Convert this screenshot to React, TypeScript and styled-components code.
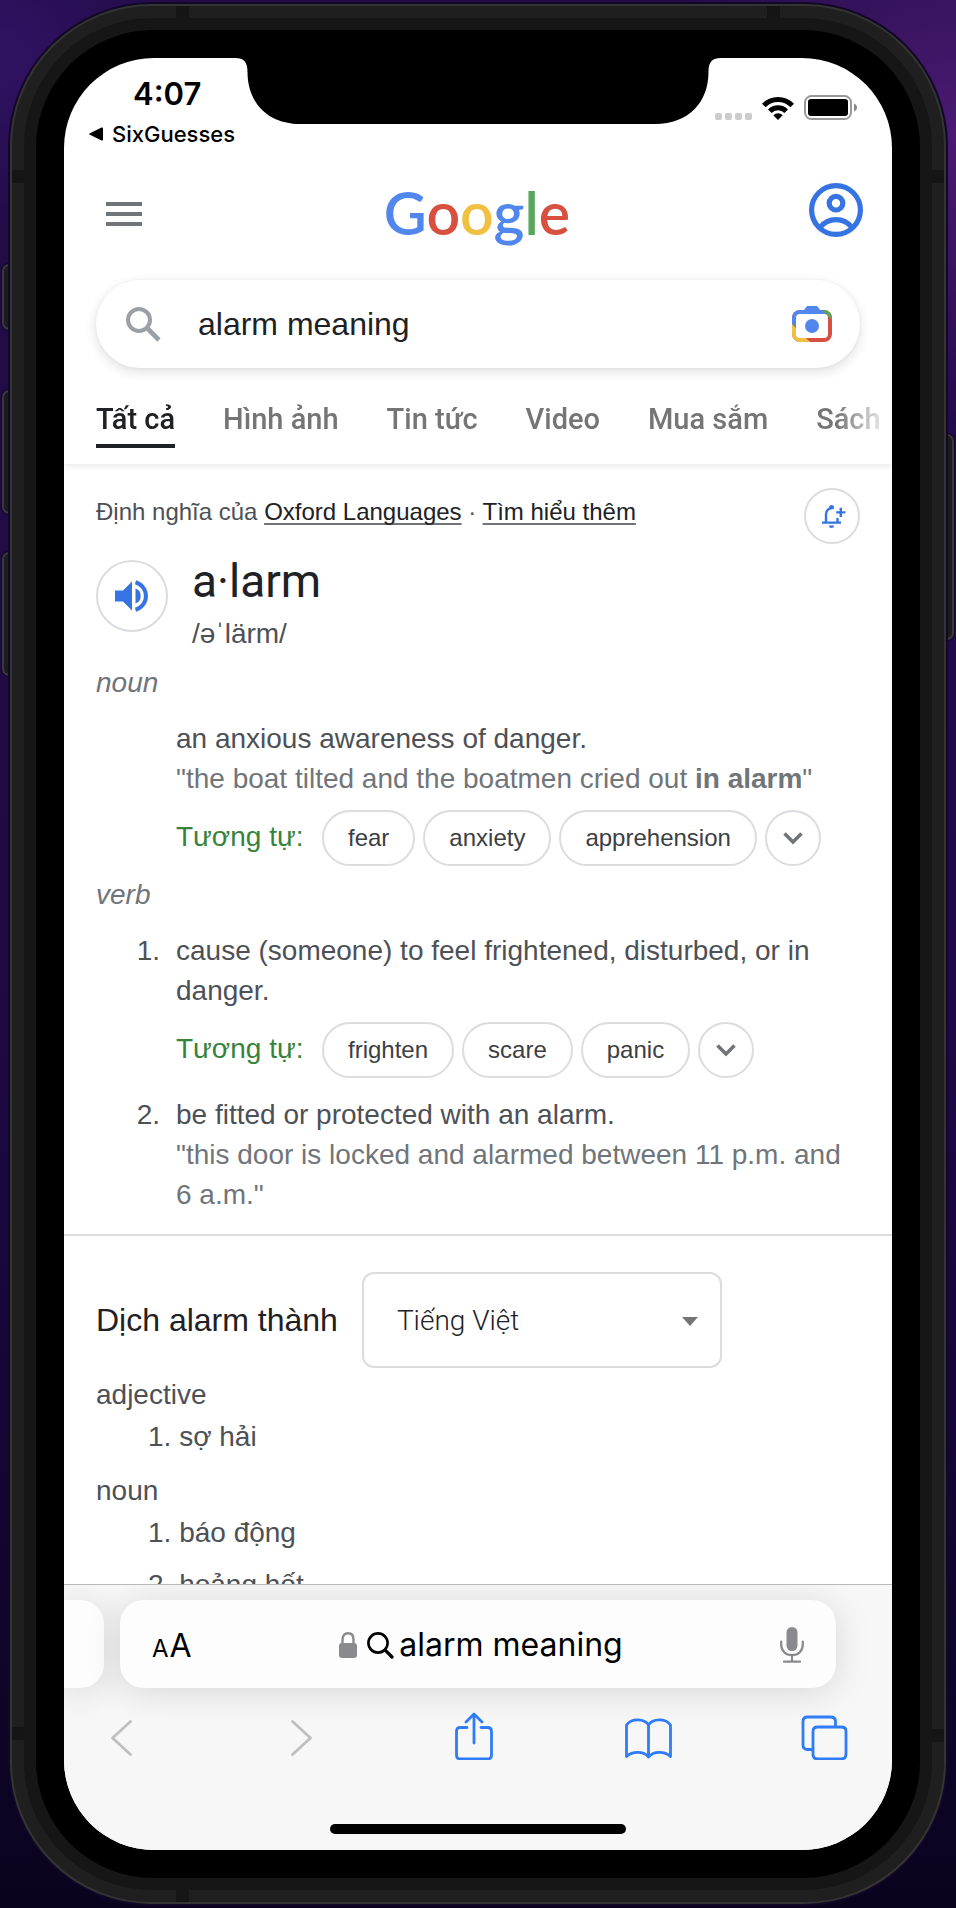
import React from 'react';
import styled, { createGlobalStyle, css } from 'styled-components';

const grotesk = '"Liberation Sans", Arial, sans-serif';
const rounded = 'Roboto, "Noto Sans", sans-serif';
const system = 'Inter, "Noto Sans", sans-serif';

const c = {
  ink: '#202124',
  body: '#4d5156',
  muted: '#70757a',
  line: '#dadce0',
  link: '#3574e2',
  tint: '#2f7cf6',
  green: '#37833b',
};

const GlobalStyle = createGlobalStyle`
  *, *::before, *::after { box-sizing: border-box; }
  body {
    margin: 0;
    background:
      radial-gradient(circle at 100% 7%, #4a1a72 0, rgba(74, 26, 114, 0) 300px),
      radial-gradient(circle at 0 3%, #301263 0, rgba(48, 18, 99, 0) 180px),
      linear-gradient(180deg, #220c48 0%, #210948 50%, #16063a 70%, #0a031e 100%);
    font-family: ${grotesk};
    color: ${c.body};
  }
  button { font: inherit; color: inherit; background: none; border: 0; padding: 0; margin: 0; cursor: pointer; }
  ol, h1, h2, h3, p { margin: 0; padding: 0; font-weight: 400; }
  ol { list-style: none; }
  svg { display: block; flex: none; }
`;

/* ---------- handset ---------- */

const Stage = styled.div`
  height: 100vh;
  padding: 4px 10px;
  overflow: hidden;
`;

const Handset = styled.div`
  position: relative;
  height: 100%;
`;

const SideKey = styled.span<{ $side: 'left' | 'right'; $top: number; $length: number }>`
  position: absolute;
  ${({ $side }) => $side}: -8px;
  top: ${({ $top }) => $top}px;
  width: 16px;
  height: ${({ $length }) => $length}px;
  border: 2px solid #3a3a3a;
  border-radius: 7px;
  background: #1c1c1c;
  box-shadow: 0 0 0 1px #120726;
`;

const Rim = styled.div`
  position: relative;
  height: 100%;
  padding: 12px;
  border: 2px solid #343434;
  border-radius: 142px;
  background: #1f1f1f;
  box-shadow: 0 0 0 2px #120726;
`;

const Antenna = styled.span<{ $edge: 'left' | 'right' | 'top' | 'bottom'; $start?: number; $end?: number }>`
  position: absolute;
  background: #151515;
  ${({ $edge, $start, $end }) => {
    const upright = $edge === 'left' || $edge === 'right';
    return css`
      ${$edge}: 0;
      width: ${upright ? 12 : 13}px;
      height: ${upright ? 13 : 12}px;
      ${$start !== undefined && `${upright ? 'top' : 'left'}: ${$start}px;`}
      ${$end !== undefined && `${upright ? 'bottom' : 'right'}: ${$end}px;`}
    `;
  }}
`;

const InnerRim = styled.div`
  height: 100%;
  padding: 12px;
  border-radius: 128px;
  background: #161616;
`;

const Bezel = styled.div`
  height: 100%;
  padding: 28px;
  border-radius: 117px;
  background: #000;
`;

const Screen = styled.div`
  display: flex;
  flex-direction: column;
  height: 100%;
  overflow: hidden;
  border-radius: 90px;
  background: #fff;
`;

/* ---------- status bar ---------- */

const StatusBar = styled.header`
  display: grid;
  grid-template-columns: minmax(0, 1fr) 486px minmax(0, 1fr);
  height: 94px;
  flex: none;
`;

const StatusLeft = styled.div`
  display: flex;
  flex-direction: column;
  padding: 18px 0 0 25px;
  font-family: ${system};
  color: #000;
  white-space: nowrap;
`;

const Clock = styled.time`
  padding-left: 44px;
  font-size: 31px;
  font-weight: 600;
  line-height: 36px;
`;

const BackToApp = styled.button`
  display: flex;
  align-items: center;
  gap: 9px;
  padding-top: 8px;
  font-size: 22px;
  font-weight: 500;
  line-height: 28px;
`;

const StatusRight = styled.div`
  display: flex;
  justify-content: flex-end;
  align-items: flex-end;
  gap: 10px;
  height: 62px;
  padding-right: 34px;
`;

/* ---------- results page ---------- */

const Page = styled.main`
  flex: 1;
  min-height: 0;
  overflow: hidden;
`;

const Masthead = styled.div`
  display: grid;
  grid-template-columns: 54px 1fr 54px;
  align-items: center;
  height: 128px;
  padding: 0 29px 12px 33px;
`;

const IconButton = styled.button`
  display: flex;
  align-items: center;
  justify-content: center;
`;

const Wordmark = styled.a`
  justify-self: center;
  padding: 6px 6px 0 0;
  font-family: Lato, sans-serif;
  font-size: 59px;
  font-weight: 600;
  line-height: 76px;
  text-decoration: none;
`;

const Letter = styled.span<{ $color: string }>`
  color: ${({ $color }) => $color};
`;

const SearchForm = styled.form`
  display: flex;
  align-items: center;
  gap: 37px;
  height: 88px;
  margin: 0 32px;
  padding: 0 28px 0 30px;
  border-radius: 44px;
  background: #fff;
  box-shadow: 0 4px 12px rgba(32, 33, 36, 0.14), 0 0 3px rgba(32, 33, 36, 0.06);
`;

const SearchInput = styled.input`
  flex: 1;
  min-width: 0;
  padding: 0;
  border: 0;
  outline: 0;
  background: none;
  font: 32px/40px ${grotesk};
  color: ${c.ink};
`;

const Tabs = styled.nav`
  display: flex;
  gap: 48px;
  padding: 34px 0 16px 32px;
  overflow: hidden;
  white-space: nowrap;
  mask-image: linear-gradient(90deg, #000 calc(100% - 56px), transparent);
`;

const TabsShade = styled.div`
  box-shadow: 0 2px 6px rgba(32, 33, 36, 0.1);
  clip-path: inset(0 0 -12px 0);
`;

const Tab = styled.a<{ $active?: boolean }>`
  flex: none;
  padding-bottom: 8px;
  border-bottom: 4px solid ${({ $active }) => ($active ? c.ink : 'transparent')};
  font: 500 29px/34px ${rounded};
  color: ${({ $active }) => ($active ? c.ink : '#757575')};
  text-decoration: none;
`;

const Dictionary = styled.section`
  padding: 24px 32px 19px;
  border-bottom: 2px solid ${c.line};
`;

const SourceRow = styled.div`
  display: flex;
  justify-content: space-between;
  height: 56px;
`;

const Source = styled.p`
  font-size: 24px;
  line-height: 48px;
`;

const SourceLink = styled.a`
  color: ${c.ink};
  text-decoration: underline;
  text-decoration-color: ${c.muted};
  text-decoration-thickness: 2px;
  text-underline-offset: 3px;
  text-decoration-skip-ink: none;
`;

const RoundButton = styled(IconButton)<{ $size: number }>`
  flex: none;
  width: ${({ $size }) => $size}px;
  height: ${({ $size }) => $size}px;
  border: 2px solid ${c.line};
  border-radius: 50%;
  color: ${c.link};
`;

const WordRow = styled.div`
  display: flex;
  gap: 24px;
  padding-top: 4px;

  ${RoundButton} { margin-top: 12px; }
`;

const Word = styled.h1`
  font: 400 46px/66px ${rounded};
  color: ${c.ink};
`;

const Phonetic = styled.p`
  font-size: 28px;
  line-height: 40px;
`;

const PartOfSpeech = styled.h2`
  margin: 7px 0 14px;
  font-size: 28px;
  font-style: italic;
  line-height: 44px;
  color: ${c.muted};
`;

const Sense = styled.li`
  display: grid;
  grid-template-columns: 64px 1fr;
  column-gap: 16px;
  font-size: 28px;
  line-height: 40px;

  & + & { margin-top: 17px; }
`;

const SenseNumber = styled.span`
  text-align: right;
`;

const Example = styled.p`
  color: ${c.muted};
`;

const Similar = styled.div`
  display: flex;
  gap: 8px;
  margin-top: 11px;
`;

const SimilarLabel = styled.span`
  min-width: 138px;
  line-height: 54px;
  color: ${c.green};
`;

const Chip = styled.button`
  height: 56px;
  padding: 0 24px;
  border: 2px solid ${c.line};
  border-radius: 28px;
  font-size: 24px;
  color: #3c4043;
`;

const Translate = styled.section`
  padding: 36px 32px 0;
`;

const TranslateRow = styled.div`
  display: flex;
  align-items: center;
  gap: 24px;
  margin-bottom: 6px;
`;

const TranslateLabel = styled.label`
  font-size: 32px;
  color: ${c.ink};
`;

const SelectBox = styled.div`
  position: relative;
  width: 360px;

  svg { position: absolute; right: 24px; top: 45px; pointer-events: none; }
`;

const Select = styled.select`
  appearance: none;
  width: 100%;
  height: 96px;
  padding: 2px 60px 0 33px;
  border: 2px solid ${c.line};
  border-radius: 12px;
  background: #fff;
  font: 300 28px/32px ${rounded};
  color: ${c.ink};
`;

const Entry = styled.div`
  font-size: 28px;
  line-height: 42px;

  & + & { margin-top: 12px; }
`;

const EntryLabel = styled.h3`
  font-size: 28px;
`;

const EntryList = styled.ol`
  padding-left: 52px;
`;

const EntryItem = styled.li`
  & + & { margin-top: 10px; }
`;

/* ---------- browser chrome ---------- */

const BrowserBar = styled.footer`
  flex: none;
  overflow: hidden;
  border-top: 1px solid #b9b9bb;
  background: #f7f7f8;
`;

const AddressRow = styled.div`
  display: flex;
  gap: 16px;
  padding: 15px 56px 0 0;
`;

const PreviousTab = styled.div`
  width: 40px;
  border-radius: 0 24px 24px 0;
  background: #fdfdfd;
  box-shadow: 0 4px 36px rgba(0, 0, 0, 0.13);
`;

const AddressBar = styled.div`
  flex: 1;
  display: grid;
  grid-template-columns: 40px 1fr 34px;
  align-items: center;
  height: 88px;
  padding: 2px 32px 0;
  border-radius: 24px;
  background: #fdfdfd;
  box-shadow: 0 4px 36px rgba(0, 0, 0, 0.13);
  font-family: ${system};
  color: #000;
`;

const TextSize = styled.button`
  display: flex;
  align-items: baseline;
  gap: 1px;
  font-size: 32px;
`;

const SmallA = styled.span`
  font-size: 24px;
`;

const Address = styled.button`
  display: flex;
  align-items: center;
  justify-content: center;
  font-size: 32px;
  line-height: 40px;

  svg + svg { margin: 0 5px 0 10px; }
`;

const DictateButton = styled(IconButton)`
  justify-content: flex-end;
`;

const Toolbar = styled.nav`
  display: flex;
  justify-content: space-between;
  padding: 24px 43px 0 34px;
  color: ${c.tint};
`;

const ToolButton = styled(IconButton)`
  width: 48px;
  height: 48px;

  &:disabled { color: #bfbfc1; }
`;

const HomeIndicator = styled.div`
  width: 296px;
  height: 10px;
  margin: 64px auto 16px;
  border-radius: 5px;
  background: #000;
`;

/* ---------- drawings ---------- */

const Notch = () => (
  <svg width="486" height="66" viewBox="0 0 486 66" aria-hidden="true">
    <path d="M0 0C9 0 12.500 4 12.500 14C12.500 44 32 66 66 66H420C454 66 473.500 44 473.500 14C473.500 4 477 0 486 0Z" fill="#000" />
  </svg>
);

const Signal = () => (
  <svg width="37" height="7" viewBox="0 0 37 7" fill="#cccccc" aria-hidden="true">
    {[0, 10, 20, 30].map((x) => (
      <rect key={x} x={x} width="7" height="7" rx="2" />
    ))}
  </svg>
);

const Wifi = () => (
  <svg width="32" height="24" viewBox="0 0 32 24" aria-hidden="true">
    <g fill="none" stroke="#000" strokeWidth="5">
      <path d="M1.800 9.400A19.800 19.800 0 0 1 30.200 9.400" />
      <path d="M7.800 15.300A11.500 11.500 0 0 1 24.200 15.300" />
    </g>
    <path d="M16 24L11.300 19.300A6.600 6.600 0 0 1 20.700 19.300Z" />
  </svg>
);

const Battery = () => (
  <svg width="54" height="26" viewBox="0 0 54 26" aria-hidden="true">
    <rect x="1" y="2" width="46" height="23" rx="6.500" fill="none" stroke="#999" strokeWidth="2" />
    <rect x="4" y="5" width="40" height="17" rx="3" />
    <path d="M50 9.500C54 11 54 16 50 17.500Z" fill="#888" />
  </svg>
);

const Burger = () => (
  <svg width="36" height="32" viewBox="0 0 36 32" fill={c.muted} aria-hidden="true">
    <rect y="8" width="36" height="4" />
    <rect y="18" width="36" height="4" />
    <rect y="28" width="36" height="4" />
  </svg>
);

const Account = () => (
  <svg width="54" height="54" viewBox="0 0 54 54" fill="none" stroke={c.link} strokeWidth="5.200" aria-hidden="true">
    <circle cx="27" cy="27" r="24.400" />
    <circle cx="27" cy="20.200" r="6.800" />
    <path d="M11 44.500C19 34 35 34 43 44.500" />
  </svg>
);

const Magnifier = () => (
  <svg width="35" height="35" viewBox="0 0 35 35" fill="none" stroke="#9aa0a6" aria-hidden="true">
    <circle cx="13" cy="13" r="11" strokeWidth="4" />
    <path d="M22 22L33 33" strokeWidth="4.600" />
  </svg>
);

const Lens = () => (
  <svg width="40" height="36" viewBox="0 0 40 36" aria-hidden="true">
    <clipPath id="lensBody">
      <rect y="4" width="40" height="32" rx="8" />
    </clipPath>
    <g clipPath="url(#lensBody)">
      <path d="M0 0H40V36H0Z" fill="#d85140" />
      <path d="M26 0H40V14L26 0Z" fill="#59a65c" />
      <path d="M0 0H26L34 8L20 20H2L0 18Z" fill="#5186ec" />
      <path d="M0 18L18 36H0Z" fill="#f1bf42" />
    </g>
    <rect x="4" y="8" width="32" height="24" rx="4" fill="#fff" />
    <path d="M12 4L15 0H25L29 5V8H10Z" fill="#5186ec" />
    <circle cx="20" cy="20" r="7" fill="#5186ec" />
  </svg>
);

const BellPlus = () => (
  <svg width="28" height="24" viewBox="-4 0 28 24" fill="none" stroke="currentColor" strokeWidth="2.400" aria-hidden="true">
    <path d="M4 18V10.500C4 6.500 6.500 3.800 11.800 3.800" />
    <path d="M15.500 14V18M0 18.600H19M14.200 8.400H23.400M18.800 3.800V13" />
    <path d="M7 21.500H12A2.500 2.500 0 0 1 7 21.500ZM7 3.500A2.500 2.500 0 0 1 12 3.500Z" fill="currentColor" stroke="none" />
  </svg>
);

const Speaker = () => (
  <svg width="34" height="32" viewBox="0 0 34 32" fill="currentColor" aria-hidden="true">
    <path d="M0 10.500H8L17 1.500V30.500L8 21.500H0Z" />
    <path d="M20.500 8.500A8 8 0 0 1 20.500 23.500Z" />
    <path d="M20.500 2.300A14.200 14.200 0 0 1 20.500 29.700" fill="none" stroke="currentColor" strokeWidth="4" />
  </svg>
);

const Chevron = () => (
  <svg width="20" height="13" viewBox="0 0 20 13" fill="none" stroke={c.muted} strokeWidth="3.600" aria-hidden="true">
    <path d="M1.500 1.500L10 10L18.500 1.500" />
  </svg>
);

const Caret = () => (
  <svg width="16" height="9" viewBox="0 0 16 9" aria-hidden="true">
    <path d="M0 0H16L8 9Z" fill="#757575" />
  </svg>
);

const BackTriangle = () => (
  <svg width="14" height="14" viewBox="0 0 14 14" aria-hidden="true">
    <path d="M1 6.200L12.500 .6C13.400 .2 14 .5 14 1.400V12.600C14 13.500 13.400 13.800 12.500 13.400L1 7.800C-.2 7.200-.2 6.800 1 6.200Z" />
  </svg>
);

const Lock = () => (
  <svg width="18" height="26" viewBox="0 0 18 26" aria-hidden="true">
    <path d="M3.500 12V7.500C3.500 3.500 5.800 1.300 9 1.300S14.500 3.500 14.500 7.500V12" fill="none" stroke="#8a8a8e" strokeWidth="2.400" />
    <rect y="11" width="18" height="15" rx="3" fill="#8a8a8e" />
  </svg>
);

const Loupe = () => (
  <svg width="27" height="27" viewBox="0 0 27 27" fill="none" stroke="#000" strokeLinecap="round" aria-hidden="true">
    <circle cx="11" cy="11" r="9.600" strokeWidth="2.600" />
    <path d="M18.200 18.200L25 25" strokeWidth="3.200" />
  </svg>
);

const Mic = () => (
  <svg width="24" height="36" viewBox="0 0 24 36" fill="none" stroke="#8a8a8e" strokeWidth="2.200" strokeLinecap="round" aria-hidden="true">
    <rect x="6.500" y="0" width="11" height="24" rx="5.500" fill="#8a8a8e" stroke="none" />
    <path d="M1.200 14.500V17.500C1.200 24 5.500 28.200 12 28.200S22.800 24 22.800 17.500V14.500M12 28.500V34.500M4 34.700H20" />
  </svg>
);

const stroke = {
  fill: 'none',
  stroke: 'currentColor',
  strokeWidth: 2.8,
  strokeLinecap: 'round' as const,
  strokeLinejoin: 'round' as const,
};

const ToolIcon = ({ d }: { d: string }) => (
  <svg width="48" height="48" viewBox="0 0 48 48" {...stroke} aria-hidden="true">
    <path d={d} />
  </svg>
);

const tools = [
  { name: 'Back', off: true, d: 'M32.500 9.500L14.500 26L32.500 42.500' },
  { name: 'Forward', off: true, d: 'M18.500 9.500L36.500 26L18.500 42.500' },
  {
    name: 'Share',
    d: 'M17 15.500H10.500Q6.500 15.500 6.500 19.500V43Q6.500 47 10.500 47H37.500Q41.500 47 41.500 43V19.500Q41.500 15.500 37.500 15.500H31M24 31V2.500M16 10L24 2L32 10',
  },
  {
    name: 'Bookmarks',
    d: 'M23.500 13C19.500 6.500 6.500 6 1.500 13V44.500C7.500 39 18.500 39 23.500 45C28.500 39 39.500 39 45.500 44.500V13C40.500 6 27.500 6.500 23.500 13ZM23.500 13V45',
  },
  {
    name: 'Tabs',
    d: 'M16.500 15H40Q45 15 45 19V42Q45 47 40 47H16.500Q12 47 12 42V19.500Q12 15 16.500 15ZM11.500 37.500H6.500Q2 37.500 2 33V9.500Q2 5 6.500 5H29.500Q34.500 5 34.500 9.500V14.500',
  },
];

/* ---------- composition ---------- */

const tabs = ['Tất cả', 'Hình ảnh', 'Tin tức', 'Video', 'Mua sắm', 'Sách'];

const wordmark: [string, string][] = [
  ['G', '#5186ec'],
  ['o', '#d85140'],
  ['o', '#f1bf42'],
  ['g', '#5186ec'],
  ['l', '#59a65c'],
  ['e', '#d85140'],
];

const SimilarWords = ({ words }: { words: string[] }) => (
  <Similar>
    <SimilarLabel>Tương tự:</SimilarLabel>
    {words.map((w) => (
      <Chip key={w}>{w}</Chip>
    ))}
    <RoundButton $size={56} aria-label="More similar words">
      <Chevron />
    </RoundButton>
  </Similar>
);

export default function App() {
  return (
    <>
      <GlobalStyle />
      <Stage>
        <Handset>
          <SideKey $side="left" $top={260} $length={66} />
          <SideKey $side="left" $top={386} $length={124} />
          <SideKey $side="left" $top={548} $length={124} />
          <SideKey $side="right" $top={430} $length={206} />
          <Rim>
            <Antenna $edge="left" $start={164} />
            <Antenna $edge="right" $start={164} />
            <Antenna $edge="top" $start={164} />
            <Antenna $edge="top" $end={164} />
            <Antenna $edge="left" $end={162} />
            <Antenna $edge="right" $end={160} />
            <Antenna $edge="bottom" $start={164} />
            <InnerRim>
              <Bezel>
                <Screen>
                  <StatusBar>
                    <StatusLeft>
                      <Clock>4:07</Clock>
                      <BackToApp>
                        <BackTriangle />
                        SixGuesses
                      </BackToApp>
                    </StatusLeft>
                    <Notch />
                    <StatusRight>
                      <Signal />
                      <Wifi />
                      <Battery />
                    </StatusRight>
                  </StatusBar>

                  <Page>
                    <Masthead>
                      <IconButton aria-label="Menu">
                        <Burger />
                      </IconButton>
                      <Wordmark href="#">
                        {wordmark.map(([letter, color], i) => (
                          <Letter key={i} $color={color}>
                            {letter}
                          </Letter>
                        ))}
                      </Wordmark>
                      <IconButton aria-label="Account">
                        <Account />
                      </IconButton>
                    </Masthead>

                    <SearchForm>
                      <Magnifier />
                      <SearchInput aria-label="Search" defaultValue="alarm meaning" />
                      <IconButton type="button" aria-label="Search by image">
                        <Lens />
                      </IconButton>
                    </SearchForm>

                    <TabsShade>
                      <Tabs>
                        {tabs.map((t, i) => (
                          <Tab key={t} href="#" $active={i === 0}>
                            {t}
                          </Tab>
                        ))}
                      </Tabs>
                    </TabsShade>

                    <Dictionary>
                      <SourceRow>
                        <Source>
                          Định nghĩa của <SourceLink href="#">Oxford Languages</SourceLink> ·{' '}
                          <SourceLink href="#">Tìm hiểu thêm</SourceLink>
                        </Source>
                        <RoundButton $size={56} aria-label="Word of the day alerts">
                          <BellPlus />
                        </RoundButton>
                      </SourceRow>
                      <WordRow>
                        <RoundButton $size={72} aria-label="Listen">
                          <Speaker />
                        </RoundButton>
                        <div>
                          <Word>a·larm</Word>
                          <Phonetic>/əˈlärm/</Phonetic>
                        </div>
                      </WordRow>

                      <PartOfSpeech>noun</PartOfSpeech>
                      <ol>
                        <Sense>
                          <SenseNumber />
                          <div>
                            <p>an anxious awareness of danger.</p>
                            <Example>
                              "the boat tilted and the boatmen cried out <b>in alarm</b>"
                            </Example>
                            <SimilarWords words={['fear', 'anxiety', 'apprehension']} />
                          </div>
                        </Sense>
                      </ol>

                      <PartOfSpeech>verb</PartOfSpeech>
                      <ol>
                        <Sense>
                          <SenseNumber>1.</SenseNumber>
                          <div>
                            <p>cause (someone) to feel frightened, disturbed, or in danger.</p>
                            <SimilarWords words={['frighten', 'scare', 'panic']} />
                          </div>
                        </Sense>
                        <Sense>
                          <SenseNumber>2.</SenseNumber>
                          <div>
                            <p>be fitted or protected with an alarm.</p>
                            <Example>"this door is locked and alarmed between 11 p.m. and 6 a.m."</Example>
                          </div>
                        </Sense>
                      </ol>
                    </Dictionary>

                    <Translate>
                      <TranslateRow>
                        <TranslateLabel htmlFor="language">Dịch alarm thành</TranslateLabel>
                        <SelectBox>
                          <Select id="language">
                            <option>Tiếng Việt</option>
                          </Select>
                          <Caret />
                        </SelectBox>
                      </TranslateRow>
                      <Entry>
                        <EntryLabel>adjective</EntryLabel>
                        <EntryList>
                          <EntryItem>1. sợ hải</EntryItem>
                        </EntryList>
                      </Entry>
                      <Entry>
                        <EntryLabel>noun</EntryLabel>
                        <EntryList>
                          <EntryItem>1. báo động</EntryItem>
                          <EntryItem>2. hoảng hốt</EntryItem>
                        </EntryList>
                      </Entry>
                    </Translate>
                  </Page>

                  <BrowserBar>
                    <AddressRow>
                      <PreviousTab />
                      <AddressBar>
                        <TextSize aria-label="Text size">
                          <SmallA>A</SmallA>A
                        </TextSize>
                        <Address>
                          <Lock />
                          <Loupe />
                          alarm meaning
                        </Address>
                        <DictateButton aria-label="Dictate">
                          <Mic />
                        </DictateButton>
                      </AddressBar>
                    </AddressRow>
                    <Toolbar>
                      {tools.map((t) => (
                        <ToolButton key={t.name} aria-label={t.name} disabled={t.off}>
                          <ToolIcon d={t.d} />
                        </ToolButton>
                      ))}
                    </Toolbar>
                    <HomeIndicator />
                  </BrowserBar>
                </Screen>
              </Bezel>
            </InnerRim>
          </Rim>
        </Handset>
      </Stage>
    </>
  );
}
